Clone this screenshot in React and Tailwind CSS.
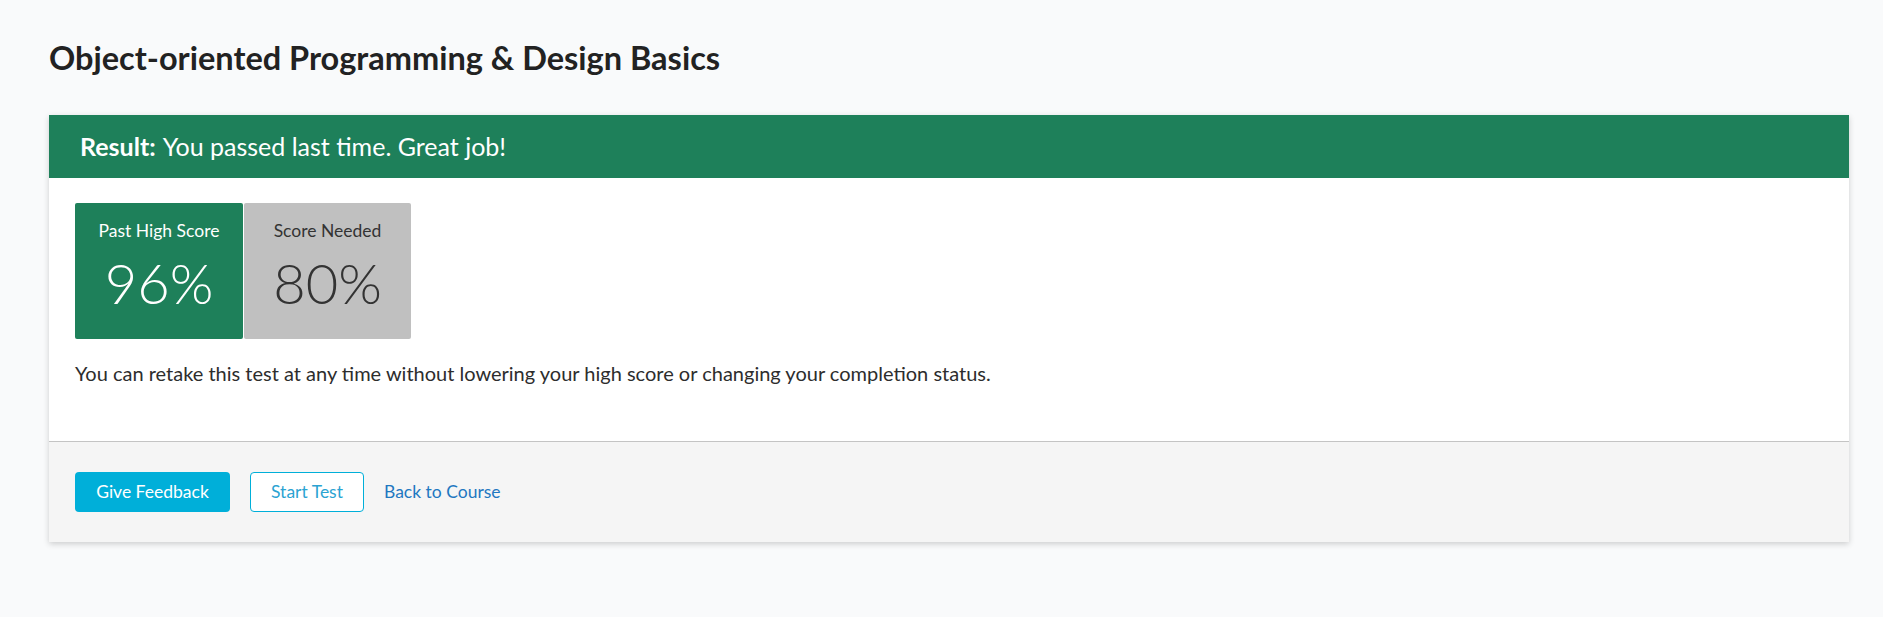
export default function App() {
    return (
        <div className="min-h-[617px] bg-[#f9fafb] pt-[38px] text-[#2d2d2d]" style={{ fontFamily: "Lato, 'Open Sans', sans-serif" }}>
            <h1 className="ml-[49px] text-[32.5px] font-bold leading-[40px] text-[#222222]">
                Object-oriented Programming &amp; Design Basics
            </h1>

            <div className="ml-[49px] mt-[37px] w-[1800px] bg-white shadow-[0_2px_6px_rgba(0,0,0,0.18)]">
                <div className="flex h-[63px] items-center bg-[#1e805a] pl-[31px] text-[25px] text-white">
                    <span className="font-bold">Result:</span>
                    <span className="ml-[7px]">You passed last time. Great job!</span>
                </div>

                <div className="pl-[26px] pt-[25px] pb-[55px]">
                    <div className="flex gap-[1px]">
                        <div className="flex h-[136px] w-[168px] flex-col items-center rounded-[2px] bg-[#1e805a] pt-[16px] text-white">
                            <span className="text-[17.5px] leading-[24px]">Past High Score</span>
                            <span className="mt-[8px] text-[56px] font-light leading-[64px]">96%</span>
                        </div>
                        <div className="flex h-[136px] w-[167px] flex-col items-center rounded-[2px] bg-[#c0c0c0] pt-[16px] text-[#333333]">
                            <span className="text-[17.5px] leading-[24px]">Score Needed</span>
                            <span className="mt-[8px] text-[56px] font-light leading-[64px]">80%</span>
                        </div>
                    </div>
                    <p className="mt-[21px] text-[20px] leading-[26px]">
                        You can retake this test at any time without lowering your high score or changing your completion status.
                    </p>
                </div>

                <div className="flex items-center gap-[20px] border-t border-[#c4c4c4] bg-[#f5f5f5] px-[26px] py-[30px]">
                    <button className="h-[40px] w-[155px] rounded-[4px] bg-[#00afd9] text-[17.5px] text-white">
                        Give Feedback
                    </button>
                    <button className="h-[40px] w-[114px] rounded-[4px] border border-[#00afd9] bg-white text-[17.5px] text-[#2ba3d2]">
                        Start Test
                    </button>
                    <a href="#" className="text-[17.5px] text-[#1f78c1]">
                        Back to Course
                    </a>
                </div>
            </div>
        </div>
    );
}
